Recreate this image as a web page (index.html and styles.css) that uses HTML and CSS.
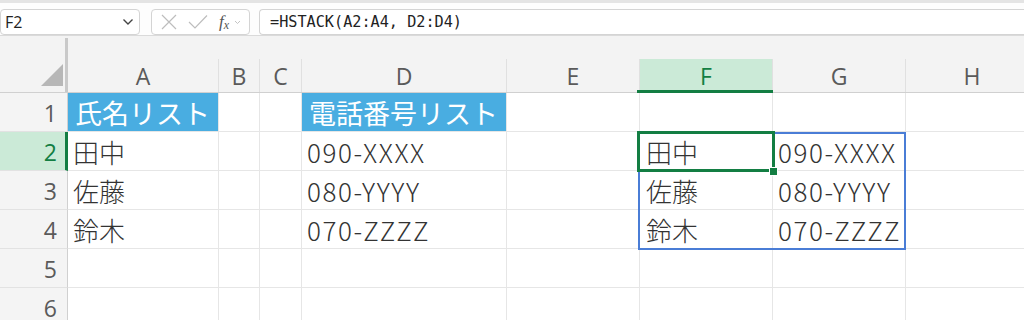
FILE: index.html
```html
<!DOCTYPE html>
<html lang="ja">
<head>
<meta charset="utf-8">
<title>HSTACK</title>
<link rel="stylesheet" href="styles.css">
</head>
<body>
<div class="topband"></div>
<div class="fbar">
  <div class="namebox">
    <span class="ref">F2</span>
    <svg class="chev" width="12" height="8" viewBox="0 0 12 8"><path d="M1.5 1.5 L6 6 L10.5 1.5" fill="none" stroke="#444" stroke-width="1.4"/></svg>
  </div>
  <div class="fxbox">
    <svg class="ic" width="18" height="18" viewBox="0 0 18 18"><path d="M2 2 L16 16 M16 2 L2 16" stroke="#bdbdbd" stroke-width="1.2" fill="none"/></svg>
    <svg class="ic" width="20" height="16" viewBox="0 0 20 16"><path d="M1 8 L7 14 L19 1.5" stroke="#bdbdbd" stroke-width="1.2" fill="none"/></svg>
    <span class="fx">f<sub>x</sub></span>
    <svg class="mini" width="7" height="5" viewBox="0 0 7 5"><path d="M1 1 L3.5 3.5 L6 1" stroke="#c4c4c4" stroke-width="1" fill="none"/></svg>
  </div>
  <div class="formula">=HSTACK(A2:A4, D2:D4)</div>
</div>

<div class="sheet">
  <div class="corner"><div class="corner-in"><svg width="22" height="22" viewBox="0 0 22 22"><polygon points="22,0 22,22 0,22" fill="#b7b7b7"/></svg></div></div>
  <div class="ch"><div class="lbl">A</div></div>
  <div class="ch"><div class="lbl">B</div></div>
  <div class="ch"><div class="lbl">C</div></div>
  <div class="ch"><div class="lbl">D</div></div>
  <div class="ch"><div class="lbl">E</div></div>
  <div class="ch sel"><div class="lbl">F</div></div>
  <div class="ch"><div class="lbl">G</div></div>
  <div class="ch"><div class="lbl">H</div></div>

  <div class="rh">1</div>
  <div class="c title">氏名リスト</div><div class="c"></div><div class="c"></div>
  <div class="c title">電話番号リスト</div><div class="c"></div><div class="c"></div><div class="c"></div><div class="c"></div>

  <div class="rh sel">2</div>
  <div class="c">田中</div><div class="c"></div><div class="c"></div>
  <div class="c num">090-XXXX</div><div class="c"></div><div class="c f">田中</div><div class="c num">090-XXXX</div><div class="c"></div>

  <div class="rh">3</div>
  <div class="c">佐藤</div><div class="c"></div><div class="c"></div>
  <div class="c num">080-YYYY</div><div class="c"></div><div class="c f">佐藤</div><div class="c num">080-YYYY</div><div class="c"></div>

  <div class="rh">4</div>
  <div class="c">鈴木</div><div class="c"></div><div class="c"></div>
  <div class="c num">070-ZZZZ</div><div class="c"></div><div class="c f">鈴木</div><div class="c num">070-ZZZZ</div><div class="c"></div>

  <div class="rh">5</div>
  <div class="c"></div><div class="c"></div><div class="c"></div><div class="c"></div><div class="c"></div><div class="c"></div><div class="c"></div><div class="c"></div>

  <div class="rh">6</div>
  <div class="c"></div><div class="c"></div><div class="c"></div><div class="c"></div><div class="c"></div><div class="c"></div><div class="c"></div><div class="c"></div>

  <div class="spill"></div>
  <div class="cursor"></div>
  <div class="handle"></div>
</div>
</body>
</html>
```

FILE: styles.css
```css
html, body {
  margin: 0;
  padding: 0;
  background: #ffffff;
  overflow: hidden;
}
body {
  width: 1024px;
  height: 320px;
  font-family: "Noto Sans CJK JP", sans-serif;
}
.topband {
  height: 3px;
  background: #e4e4e4;
}
.fbar {
  height: 33px;
  box-sizing: border-box;
  border-bottom: 1px solid #dadada;
  display: flex;
  align-items: flex-start;
  padding-top: 6px;
  background: #fdfdfd;
}
.namebox {
  width: 140px;
  height: 26px;
  box-sizing: border-box;
  border: 1px solid #d4d4d4;
  border-radius: 4px;
  background: #fff;
  display: flex;
  align-items: center;
  justify-content: space-between;
  padding: 0 5px 0 4px;
}
.ref {
  font-family: "Open Sans", sans-serif;
  font-size: 16px;
  color: #222;
}
.fxbox {
  margin-left: 11px;
  width: 99px;
  height: 26px;
  box-sizing: border-box;
  border: 1px solid #d4d4d4;
  border-radius: 4px;
  background: #fff;
  display: flex;
  align-items: center;
  padding-left: 8px;
  gap: 10px;
}
.fx {
  font-family: "Liberation Serif", serif;
  font-style: italic;
  font-size: 17px;
  color: #555;
  margin-left: 1px;
  line-height: 1;
}
.fx sub {
  font-size: 12px;
  vertical-align: -2px;
}
.mini {
  margin-left: -5px;
}
.formula {
  margin-left: 9px;
  flex: 1;
  height: 26px;
  box-sizing: border-box;
  border: 1px solid #d4d4d4;
  border-right: none;
  border-radius: 4px 0 0 4px;
  background: #fff;
  padding-left: 10px;
  font-family: "DejaVu Sans Mono", monospace;
  font-size: 15.2px;
  line-height: 24px;
  color: #222;
}

.sheet {
  position: relative;
  display: grid;
  grid-template-columns: 68px 151px 41px 42px 205px 133px 133px 133px 133px;
  grid-template-rows: 57px repeat(6, 39px);
  background: #fff;
}
.corner {
  background: #f3f3f3;
  border-bottom: 1px solid #d0d0d0;
  box-sizing: border-box;
  display: flex;
  align-items: flex-end;
}
.corner-in {
  width: 100%;
  height: 54px;
  box-sizing: border-box;
  border-right: 3px solid #c9c9c9;
  display: flex;
  align-items: flex-end;
  justify-content: flex-end;
  padding: 0 2px 6px 0;
}
.ch {
  position: relative;
  background: #f3f3f3;
  border-bottom: 1px solid #d0d0d0;
  box-sizing: border-box;
  display: flex;
  align-items: flex-end;
}
.lbl {
  width: 100%;
  height: 33px;
  box-sizing: border-box;
  border-right: 1px solid #e0e0e0;
  display: flex;
  align-items: center;
  justify-content: center;
  font-family: "Open Sans", sans-serif;
  font-size: 23px;
  color: #5a5a5a;
}
.ch.sel .lbl {
  background: #cbead7;
  color: #137e43;
}
.ch.sel::after {
  content: "";
  position: absolute;
  left: -3px;
  right: -2px;
  bottom: -1px;
  height: 3px;
  background: #137e43;
}
.rh {
  background: #f4f4f4;
  border-right: 1px solid #d0d0d0;
  border-bottom: 1px solid #e2e2e2;
  box-sizing: border-box;
  display: flex;
  align-items: center;
  justify-content: flex-end;
  padding-right: 10px;
  padding-top: 2px;
  font-family: "Open Sans", sans-serif;
  font-size: 23px;
  color: #5a5a5a;
}
.rh.sel {
  background: #cbead7;
  color: #137e43;
  border-right: 3px solid #137e43;
  padding-right: 8px;
}
.c {
  border-right: 1px solid #e6e6e6;
  border-bottom: 1px solid #e6e6e6;
  box-sizing: border-box;
  display: flex;
  align-items: center;
  padding-left: 5px;
  font-size: 26px;
  font-weight: 300;
  color: #333;
  white-space: nowrap;
}
.c.num {
  letter-spacing: 1.6px;
}
.c.f {
  padding-left: 6px;
}
.c.title {
  background: #49ade1;
  color: #fff;
  font-size: 27px;
  font-weight: 400;
  padding-left: 7px;
}
.spill {
  position: absolute;
  left: 638px;
  top: 96px;
  width: 268px;
  height: 118px;
  box-sizing: border-box;
  border: 2px solid #4a7dd6;
}
.cursor {
  position: absolute;
  left: 637px;
  top: 95px;
  width: 138px;
  height: 41px;
  box-sizing: border-box;
  border: 3px solid #137e43;
}
.handle {
  position: absolute;
  left: 769px;
  top: 131px;
  width: 9px;
  height: 9px;
  box-sizing: border-box;
  background: #137e43;
  border: 1px solid #fff;
}
```
